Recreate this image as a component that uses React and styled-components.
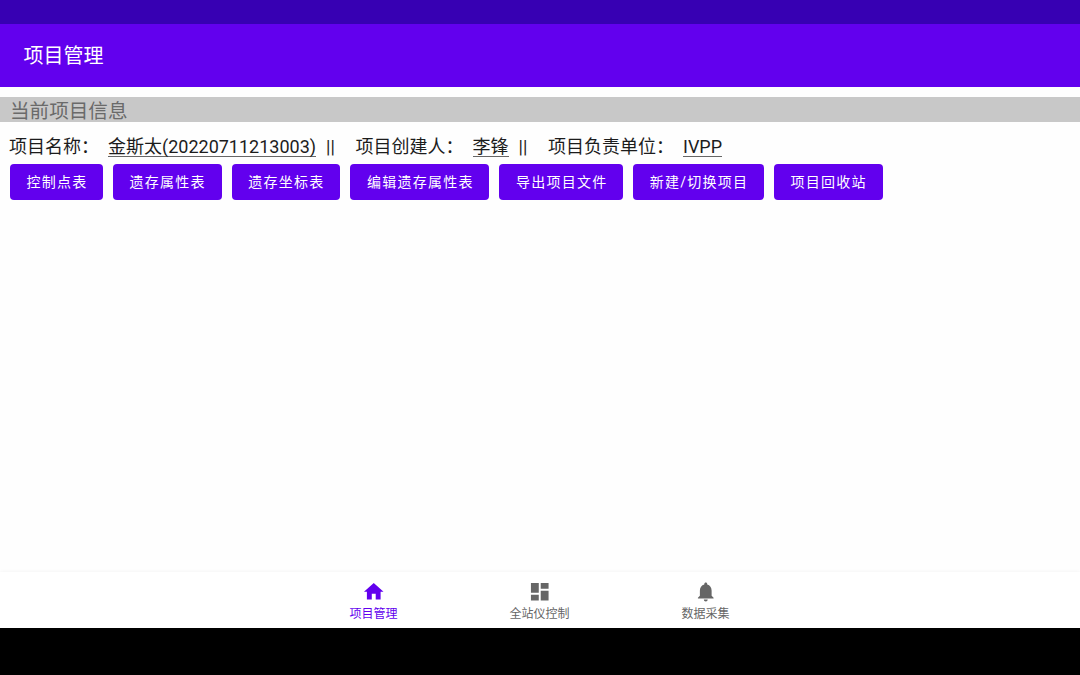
import React, { useState } from "react";
import styled, { createGlobalStyle } from "styled-components";
import { MdHome, MdDashboard, MdNotifications } from "react-icons/md";

const actions = [
    { label: "控制点表", width: 92.9 },
    { label: "遗存属性表", width: 108.7 },
    { label: "遗存坐标表", width: 108.7 },
    { label: "编辑遗存属性表", width: 139 },
    { label: "导出项目文件", width: 123.9 },
    { label: "新建/切换项目", width: 130.7 },
    { label: "项目回收站", width: 108.7 },
];

const tabs = [
    { id: "project", label: "项目管理", icon: MdHome },
    { id: "station", label: "全站仪控制", icon: MdDashboard },
    { id: "collect", label: "数据采集", icon: MdNotifications },
];

function App() {
    const [activeTab, setActiveTab] = useState("project");

    return (
        <Screen>
            <GlobalStyle />
            <StatusBar />
            <AppBar>
                <Title>项目管理</Title>
            </AppBar>
            <Content>
                <SectionTitle>当前项目信息</SectionTitle>
                <InfoRow>
                    <Label $width={99}>项目名称：</Label>
                    <Value $width={208}>金斯太(20220711213003)</Value>
                    <Divider>||</Divider>
                    <Label $width={117}>项目创建人：</Label>
                    <Value $width={36}>李锋</Value>
                    <Divider>||</Divider>
                    <Label $width={135}>项目负责单位：</Label>
                    <Value $width={39}>IVPP</Value>
                </InfoRow>
                <Actions>
                    {actions.map((action) => (
                        <Button key={action.label} $width={action.width}>{action.label}</Button>
                    ))}
                </Actions>
            </Content>
            <BottomNav>
                {tabs.map(({ id, label, icon: Icon }) => (
                    <Tab key={id} $active={activeTab === id} onClick={() => setActiveTab(id)}>
                        <Icon size={23.5} />
                        <span>{label}</span>
                    </Tab>
                ))}
            </BottomNav>
            <SystemBar />
        </Screen>
    );
}

const GlobalStyle = createGlobalStyle`
  * {
    box-sizing: border-box;
  }

  body {
    margin: 0;
    font-family: Roboto, "Noto Sans CJK SC", sans-serif;
  }
`;

const Screen = styled.div`
  display: flex;
  flex-direction: column;
  width: 1080px;
  height: 675px;
  overflow: hidden;
  background: #fefefe;
`;

const StatusBar = styled.div`
  height: 24px;
  background: #3700b3;
`;

const AppBar = styled.header`
  display: flex;
  align-items: center;
  height: 63px;
  padding: 0 23.5px;
  background: #6200ee;
`;

const Title = styled.h1`
  margin: 0;
  font-size: 20px;
  font-weight: 400;
  line-height: 24px;
  color: #fff;
`;

const Content = styled.main`
  flex: 1;
  padding-top: 10px;
`;

const SectionTitle = styled.h2`
  height: 25px;
  margin: 0;
  padding-left: 10px;
  font-size: 19.6px;
  font-weight: 400;
  line-height: 30px;
  color: #6a6a6a;
  background: #c8c8c8;
`;

const InfoRow = styled.div`
  display: flex;
  align-items: flex-start;
  height: 42px;
  padding: 13px 0 0 9px;
  font-size: 18px;
  line-height: 23px;
  white-space: nowrap;
  color: #1c1c1c;
`;

const Label = styled.span`
  flex: none;
  width: ${(props) => props.$width}px;
`;

const Value = styled.span`
  flex: none;
  width: ${(props) => props.$width}px;
  height: 22px;
  border-bottom: 1px solid #666;
`;

const Divider = styled.span`
  flex: none;
  width: 39.5px;
  padding-left: 10px;
`;

const Actions = styled.div`
  display: flex;
  gap: 10px;
  padding-left: 10px;
`;

const Button = styled.button`
  flex: none;
  width: ${(props) => props.$width}px;
  height: 36px;
  padding: 0 0 2px 1px;
  border: none;
  border-radius: 4px;
  font-family: inherit;
  font-size: 14px;
  letter-spacing: 1.25px;
  white-space: nowrap;
  color: #fff;
  background: #6200ee;
`;

const BottomNav = styled.nav`
  display: flex;
  justify-content: center;
  height: 56px;
  padding-right: 1px;
  background: #fff;
  box-shadow: 0 -1px 3px rgba(0, 0, 0, 0.03);
`;

const Tab = styled.button`
  display: flex;
  flex-direction: column;
  align-items: center;
  width: 166px;
  padding: 8px 0 0;
  border: none;
  font-family: inherit;
  font-size: 12px;
  line-height: 20px;
  color: ${(props) => (props.$active ? "#6200ee" : "#666")};
  background: none;

  svg {
    flex: none;
    margin-bottom: 0.5px;
  }
`;

const SystemBar = styled.div`
  height: 47px;
  background: #000;
`;

export default App;
